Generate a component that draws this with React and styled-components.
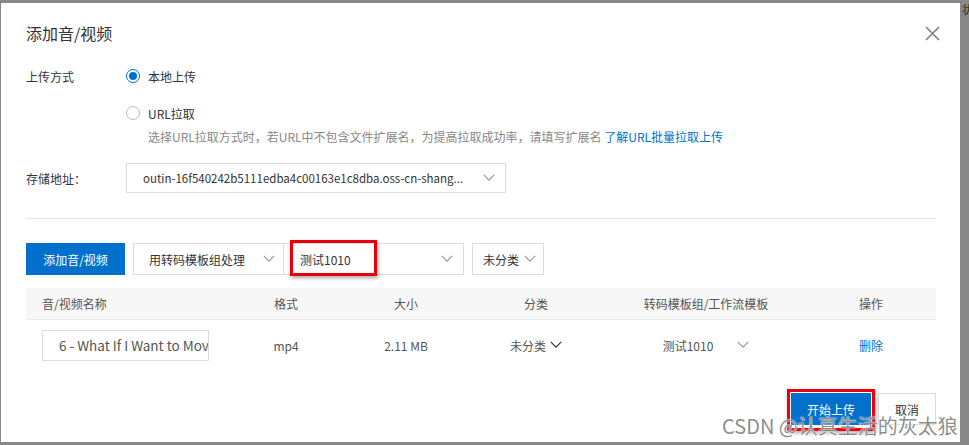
import styled, { createGlobalStyle } from "styled-components"

const GlobalStyle = createGlobalStyle`
  html, body {
    margin: 0;
    padding: 0;
    background: #878787;
  }
  body {
    font-family: "Noto Sans CJK SC", "Noto Sans", sans-serif;
    font-size: 12px;
    color: #333;
  }
`;

const Page = styled.div`
  position: relative;
  width: 969px;
  height: 445px;
  overflow: hidden;
  padding: 3px 0 0 1px;
  box-sizing: border-box;
`;

const BackdropText = styled.span`
  position: absolute;
  top: 1px;
  left: 962px;
  font-size: 11px;
  color: #3a2a10;
  white-space: nowrap;
`;

const Modal = styled.div`
  width: 959px;
  height: 439px;
  background: #fff;
  box-sizing: border-box;
  padding: 0 24px 0 25px;
  display: flex;
  flex-direction: column;
`;

const Header = styled.div`
  height: 60px;
  display: flex;
  align-items: center;
  justify-content: space-between;
`;

const Title = styled.h2`
  margin: 0;
  font-size: 16px;
  font-weight: 400;
  color: #333;
`;

const Close = styled.button`
  border: none;
  background: none;
  padding: 0;
  margin-right: -4px;
  width: 16px;
  height: 16px;
  display: flex;
  align-items: center;
  justify-content: center;
  cursor: pointer;
`;

const FormRow = styled.div`
  display: flex;
  align-items: center;
  height: ${(p) => p.$h || 26}px;
  margin-top: ${(p) => p.$mt || 0}px;
`;

const Label = styled.div`
  width: 100px;
  flex-shrink: 0;
  color: #333;
`;

const Radio = styled.span`
  width: 14px;
  height: 14px;
  box-sizing: border-box;
  border-radius: 50%;
  border: 1px solid ${(p) => (p.$checked ? "#0070cc" : "#bbb")};
  display: inline-flex;
  align-items: center;
  justify-content: center;
  margin-right: 8px;
  &::after {
    content: "";
    width: 8px;
    height: 8px;
    border-radius: 50%;
    background: ${(p) => (p.$checked ? "#0070cc" : "transparent")};
  }
`;

const OptionText = styled.span`
  color: #333;
`;

const Hint = styled.div`
  margin: 2px 0 0 122px;
  line-height: 18px;
  color: #888;
`;

const Link = styled.a`
  color: #0070cc;
  cursor: pointer;
  text-decoration: none;
`;

const Select = styled.div`
  width: ${(p) => p.$w}px;
  height: ${(p) => p.$h || 32}px;
  box-sizing: border-box;
  border: 1px solid #dcdcdc;
  display: flex;
  align-items: center;
  justify-content: space-between;
  padding: 0 ${(p) => p.$pr || 10}px 0 ${(p) => p.$pl || 16}px;
  margin-left: ${(p) => p.$ml || 0}px;
  color: #333;
  font-size: ${(p) => p.$fs || 12}px;
  background: #fff;
  white-space: nowrap;
  position: relative;
`;

const Divider = styled.div`
  height: 1px;
  background: #e3e3e3;
  margin-top: 25px;
`;

const Toolbar = styled.div`
  display: flex;
  align-items: center;
  margin-top: 24px;
`;

const PrimaryButton = styled.button`
  height: 32px;
  width: ${(p) => p.$w}px;
  border: none;
  background: #0070cc;
  color: #fff;
  font-family: inherit;
  font-size: 12px;
  padding: 0;
  cursor: pointer;
`;

const GhostButton = styled.button`
  height: 32px;
  width: ${(p) => p.$w}px;
  border: 1px solid #dcdcdc;
  background: #fff;
  color: #333;
  font-family: inherit;
  font-size: 12px;
  padding: 0;
  cursor: pointer;
`;

const Highlight = styled.div`
  position: absolute;
  left: ${(p) => p.$l}px;
  top: ${(p) => p.$t}px;
  width: ${(p) => p.$w}px;
  height: ${(p) => p.$h}px;
  box-sizing: border-box;
  border: 3px solid #e8000b;
  box-shadow: 1px 2px 4px rgba(0, 0, 0, 0.35);
  pointer-events: none;
`;

const Table = styled.div`
  margin-top: 13px;
`;

const Grid = styled.div`
  display: grid;
  grid-template-columns: 200px 120px 120px 140px 200px 130px;
  align-items: center;
`;

const HeadRow = styled(Grid)`
  height: 32px;
  background: #f7f7f7;
  border-bottom: 1px solid #e8e8e8;
  box-sizing: border-box;
  color: #555;
`;

const BodyRow = styled(Grid)`
  height: 50px;
  color: #555;
`;

const Cell = styled.div`
  padding-left: ${(p) => (p.$left ? 16 : 0)}px;
  text-align: ${(p) => (p.$left ? "left" : "center")};
  display: flex;
  align-items: center;
  justify-content: ${(p) => (p.$left ? "flex-start" : "center")};
  gap: ${(p) => p.$gap || 0}px;
`;

const NameInput = styled.div`
  width: 167px;
  height: 31px;
  box-sizing: border-box;
  border: 1px solid #dcdcdc;
  padding-left: 16px;
  line-height: 29px;
  overflow: hidden;
  white-space: nowrap;
  color: #555;
  font-size: 13.5px;
`;

const Footer = styled.div`
  margin-top: 23px;
  display: flex;
  justify-content: flex-end;
  gap: 7px;
`;

const StartWrap = styled.div`
  position: relative;
`;

const Watermark = styled.div`
  position: absolute;
  left: 722px;
  top: 411px;
  font-family: "Noto Sans CJK SC", "Liberation Sans", sans-serif;
  font-size: 20px;
  color: rgba(120, 120, 120, 0.85);
  text-shadow: 0 0 2px #fff, 0 0 1px #fff;
  white-space: nowrap;
  pointer-events: none;
`;

const Chevron = ({ color = "#999", w = 12 }) => (
  <svg width={w} height={w * 0.6} viewBox="0 0 12 7" fill="none">
    <path d="M0.8 0.8 L6 6 L11.2 0.8" stroke={color} strokeWidth="1.2" />
  </svg>
);

const CloseIcon = () => (
  <svg width="15" height="15" viewBox="0 0 15 15">
    <path d="M1 1 L14 14 M14 1 L1 14" stroke="#808080" strokeWidth="1.6" />
  </svg>
);

export default function App() {
  return (
    <Page>
      <GlobalStyle />
      <BackdropText>状</BackdropText>
      <Modal>
        <Header>
          <Title>添加音/视频</Title>
          <Close>
            <CloseIcon />
          </Close>
        </Header>

        <FormRow>
          <Label>上传方式</Label>
          <Radio $checked />
          <OptionText>本地上传</OptionText>
        </FormRow>
        <FormRow $mt={11}>
          <Label />
          <Radio />
          <OptionText>URL拉取</OptionText>
        </FormRow>
        <Hint>
          选择URL拉取方式时，若URL中不包含文件扩展名，为提高拉取成功率，请填写扩展名{" "}
          <Link>了解URL批量拉取上传</Link>
        </Hint>
        <FormRow $mt={17} $h={30}>
          <Label>存储地址：</Label>
          <Select $w={380} $h={30} $pl={16} $pr={10} $fs={11.5}>
            outin-16f540242b5111edba4c00163e1c8dba.oss-cn-shang...
            <Chevron />
          </Select>
        </FormRow>

        <Divider />

        <Toolbar>
          <PrimaryButton $w={99}>添加音/视频</PrimaryButton>
          <Select $w={151} $ml={8} $pl={15} $pr={8}>
            用转码模板组处理
            <Chevron />
          </Select>
          <Select $w={181} $ml={-1} $pl={16} $pr={10}>
            测试1010
            <Chevron />
            <Highlight $l={6} $t={-4} $w={87} $h={36} />
          </Select>
          <Select $w={72} $ml={8} $pl={10} $pr={7}>
            未分类
            <Chevron />
          </Select>
        </Toolbar>

        <Table>
          <HeadRow>
            <Cell $left>音/视频名称</Cell>
            <Cell>格式</Cell>
            <Cell>大小</Cell>
            <Cell>分类</Cell>
            <Cell>转码模板组/工作流模板</Cell>
            <Cell>操作</Cell>
          </HeadRow>
          <BodyRow>
            <Cell $left>
              <NameInput>6 - What If I Want to Move Faster</NameInput>
            </Cell>
            <Cell>mp4</Cell>
            <Cell>2.11 MB</Cell>
            <Cell $gap={4}>
              未分类
              <Chevron color="#333" />
            </Cell>
            <Cell $gap={24}>
              测试1010
              <Chevron />
            </Cell>
            <Cell>
              <Link>删除</Link>
            </Cell>
          </BodyRow>
        </Table>

        <Footer>
          <StartWrap>
            <PrimaryButton $w={80}>开始上传</PrimaryButton>
            <Highlight $l={-4} $t={-4} $w={88} $h={42} />
          </StartWrap>
          <GhostButton $w={58}>取消</GhostButton>
        </Footer>
      </Modal>
      <Watermark>CSDN @认真生活的灰太狼</Watermark>
    </Page>
  );
}
